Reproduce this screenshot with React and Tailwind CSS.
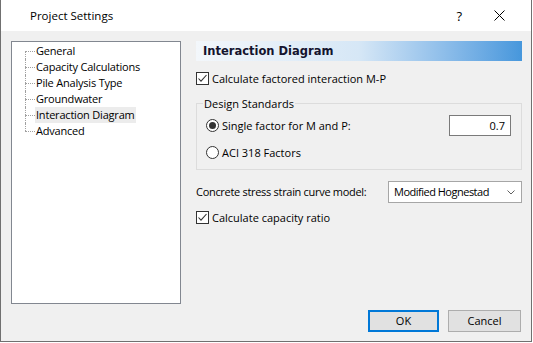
function Check({ label }) {
  return (
    <div className="flex items-center h-[13px]">
      <span className="w-[13px] h-[13px] border border-[#333333] bg-white flex items-center justify-center shrink-0">
        <svg width="11" height="11" viewBox="0 0 11 11">
          <path d="M1.5 5.5 L4 8.2 L9.5 2" fill="none" stroke="#333333" strokeWidth="1.1" />
        </svg>
      </span>
      <span className="ml-[3px] leading-[16px]">{label}</span>
    </div>
  );
}

function Radio({ label, checked }) {
  return (
    <div className="flex items-center">
      <span className="w-[13px] h-[13px] rounded-full border border-[#333333] bg-white flex items-center justify-center shrink-0">
        {checked && <span className="w-[7px] h-[7px] rounded-full bg-[#333333]" />}
      </span>
      <span className="ml-[3px] leading-[16px]">{label}</span>
    </div>
  );
}

const items = [
  "General",
  "Capacity Calculations",
  "Pile Analysis Type",
  "Groundwater",
  "Interaction Diagram",
  "Advanced",
];

function TreeRow({ label, index }) {
  const first = index === 0;
  const last = index === items.length - 1;
  const sel = label === "Interaction Diagram";
  return (
    <div className="flex h-[16px]">
      <div className="ml-[13px] w-[10px] flex flex-col shrink-0">
        <div className={first ? "h-[8px]" : "h-[8px] border-l border-dotted border-[#a0a0a0]"} />
        <div
          className={
            last
              ? "h-[8px] border-t border-dotted border-[#a0a0a0]"
              : "h-[8px] border-t border-l border-dotted border-[#a0a0a0]"
          }
        />
      </div>
      <span
        className={
          sel
            ? "px-[1px] leading-[16px] tracking-[-0.2px] bg-[#ececec]"
            : "px-[1px] leading-[16px] tracking-[-0.2px]"
        }
      >
        {label}
      </span>
    </div>
  );
}

export default function App() {
  return (
    <div className="w-[533px] h-[343px] bg-white font-['Open_Sans',sans-serif] text-[11px] leading-[16px] text-black">
      <div className="w-[532px] h-[342px] border-x border-b border-[#707070] flex flex-col">
        <div className="h-[31px] shrink-0 bg-white flex items-center pl-[29px]">
          <span className="flex-1 text-[11.5px]">Project Settings</span>
          <span className="text-[13px] mr-[32px]">?</span>
          <svg width="11" height="11" viewBox="0 0 11 11" className="mr-[26px]">
            <path d="M0.5 0.5 L10.5 10.5 M10.5 0.5 L0.5 10.5" stroke="#000" strokeWidth="1" fill="none" />
          </svg>
        </div>
        <div className="flex-1 bg-[#f0f0f0] flex flex-col pl-[10px] pt-[10px]">
          <div className="flex">
            <div className="w-[170px] h-[263px] border border-[#828790] bg-white pt-[1px] shrink-0">
              {items.map((it, i) => (
                <TreeRow key={it} label={it} index={i} />
              ))}
            </div>
            <div className="ml-[15px] w-[326px] flex flex-col">
              <div className="h-[20px] flex items-center pl-[7px] bg-gradient-to-r from-[#f3f7fb] via-[#d6e7f6] to-[#4697dc]">
                <span className="font-['DejaVu_Sans',sans-serif] font-bold text-[11.5px] text-[#14142e]">Interaction Diagram</span>
              </div>
              <div className="mt-[11px]">
                <Check label="Calculate factored interaction M-P" />
              </div>
              <div className="mt-[18px] relative border border-[#dcdcdc] h-[67px] pt-[11px] pl-[9px] pr-[10px]">
                <span className="absolute left-[6px] top-[-8px] px-[1px] bg-[#f0f0f0] leading-[16px]">Design Standards</span>
                <div className="flex items-center justify-between h-[21px]">
                  <Radio checked label="Single factor for M and P:" />
                  <div className="w-[62px] h-[21px] border border-[#7a7a7a] bg-white flex items-center justify-end pr-[5px]">
                    0.7
                  </div>
                </div>
                <div className="flex items-center h-[21px] mt-[6px]">
                  <Radio label="ACI 318 Factors" />
                </div>
              </div>
              <div className="mt-[11px] flex items-center justify-between h-[22px]">
                <span className="tracking-[-0.3px]">Concrete stress strain curve model:</span>
                <div className="w-[134px] h-[22px] border border-[#a6a6a6] bg-white flex items-center pl-[5px] pr-[6px]">
                  <span className="flex-1 tracking-[-0.5px]">Modified Hognestad</span>
                  <svg width="8" height="5" viewBox="0 0 8 5">
                    <path d="M0.5 0.5 L4 4 L7.5 0.5" fill="none" stroke="#606060" strokeWidth="1" />
                  </svg>
                </div>
              </div>
              <div className="mt-[8px]">
                <Check label="Calculate capacity ratio" />
              </div>
            </div>
          </div>
          <div className="mt-[6px] flex justify-end gap-[9px] pr-[10px]">
            <button className="w-[71px] h-[22px] border-2 border-[#0078d7] bg-[#e1e1e1] flex items-center justify-center">
              OK
            </button>
            <button className="w-[73px] h-[22px] border border-[#adadad] bg-[#e1e1e1] flex items-center justify-center">
              Cancel
            </button>
          </div>
        </div>
      </div>
    </div>
  );
}
